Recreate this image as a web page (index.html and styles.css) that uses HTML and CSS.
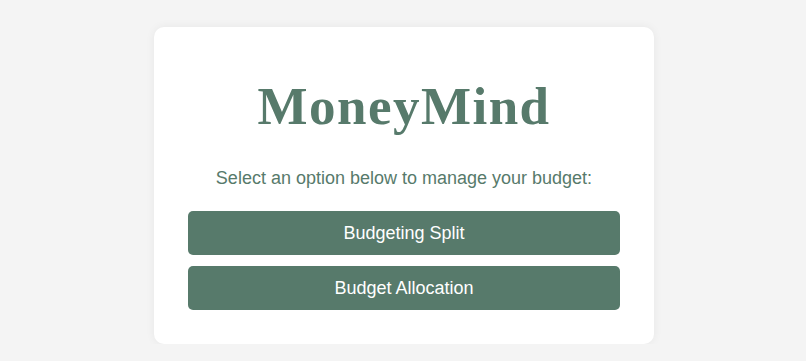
FILE: index.html
```html
<!DOCTYPE html>
<html lang="en">
<head>
    <meta charset="UTF-8">
    <meta name="viewport" content="width=device-width, initial-scale=1.0">
    <title>MoneyMind</title>
    <link rel="stylesheet" href="styles.css">
</head>
<body>
    <div class="card">
        <h1>MoneyMind</h1>
        <p class="subtitle">Select an option below to manage your budget:</p>
        <div class="options">
            <button>Budgeting Split</button>
            <button>Budget Allocation</button>
        </div>
    </div>
</body>
</html>
```

FILE: styles.css
```css
body {
    font-family: "Liberation Sans", Arial, sans-serif;
    background-color: #f4f4f4;
    margin: 0;
    padding: 27px 0 0 2px;
    display: flex;
    justify-content: center;
}
.card {
    width: 500px;
    box-sizing: border-box;
    padding: 48px 34px 34px;
    background-color: #fff;
    border-radius: 10px;
    box-shadow: 0 0 10px rgba(0, 0, 0, 0.06);
    text-align: center;
}
h1 {
    font-family: "Liberation Serif", "Times New Roman", serif;
    font-size: 53px;
    font-weight: bold;
    letter-spacing: 1.5px;
    line-height: 1.2;
    color: #577a6b;
    margin: 0 0 29px;
}
.subtitle {
    font-size: 18px;
    line-height: 1.2;
    color: #577a6b;
    margin: 0 0 22px;
}
.options {
    display: flex;
    flex-direction: column;
    gap: 11px;
}
button {
    height: 44px;
    font-family: inherit;
    font-size: 18px;
    color: #fff;
    background-color: #577a6b;
    border: none;
    border-radius: 5px;
    cursor: pointer;
}
button:hover {
    background-color: #4a6a5c;
}
```
